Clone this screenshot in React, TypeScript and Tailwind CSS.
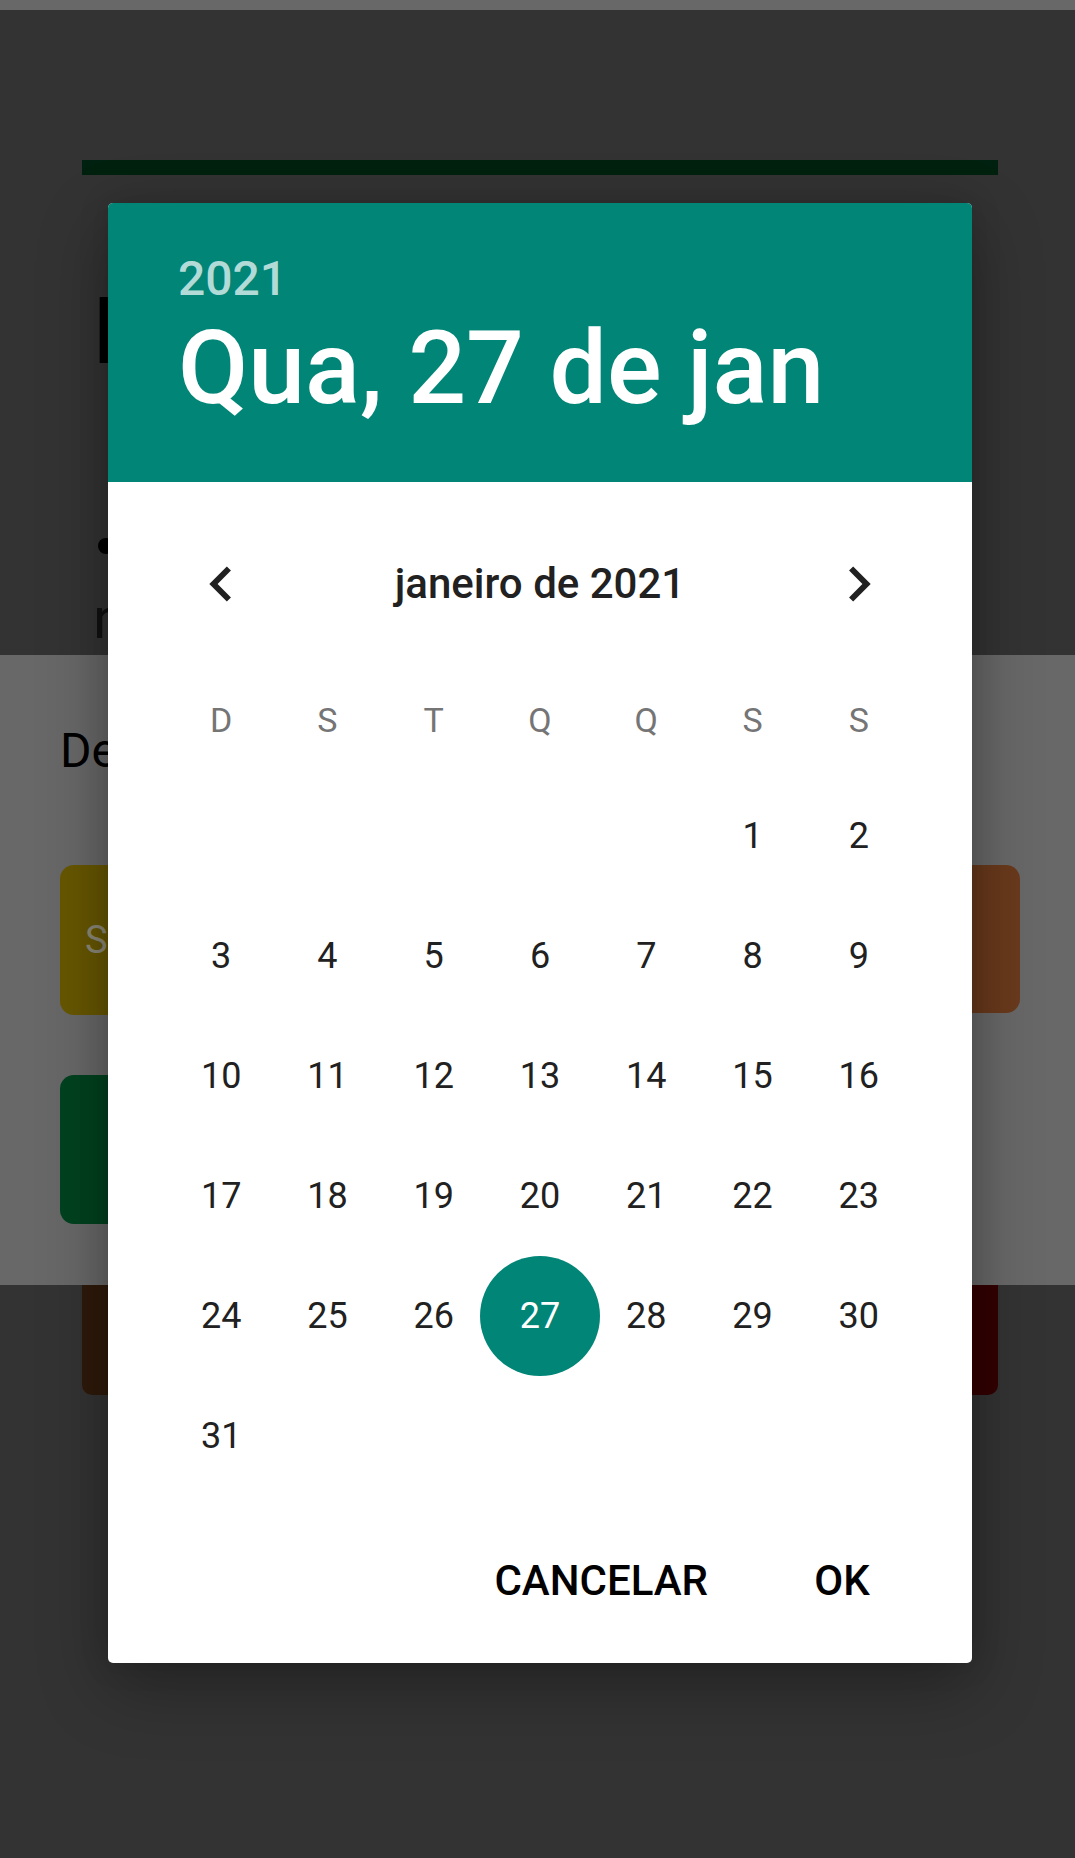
import React from "react";

const weekDays = ["D", "S", "T", "Q", "Q", "S", "S"];
// janeiro de 2021 começa numa sexta
const blanks = 5;
const days = Array.from({ length: 31 }, (_, i) => i + 1);
const selectedDay = 27;

const ChevronLeft = () => (
  <svg width="70" height="70" viewBox="0 0 24 24" fill="#212121">
    <path d="M15.41 7.41L14 6l-6 6 6 6 1.41-1.41L10.83 12z" />
  </svg>
);

const ChevronRight = () => (
  <svg width="70" height="70" viewBox="0 0 24 24" fill="#212121">
    <path d="M10 6L8.59 7.41 13.17 12l-4.58 4.59L10 18l6-6z" />
  </svg>
);

const BackgroundPage = () => (
  <div className="flex flex-col">
    <div className="h-[10px] bg-[#686868]" />
    <div className="ml-[82px] mr-[77px] mt-[150px] h-[15px] bg-[#00210f]" />
    <h1 className="mt-[110px] pl-[92px] text-[93px] leading-none text-black">Data</h1>
    <div className="mt-[138px] pl-[93px] text-[58px] leading-[68px] text-[#111]">
      <div className="flex items-center h-[68px]">
        <span className="ml-[5px] mt-[-8px] w-[16px] h-[16px] rounded-full bg-black inline-block" />
        <span className="ml-[20px]">Escolha</span>
      </div>
      <div>no dia</div>
    </div>
    <section className="mt-[3px] h-[630px] bg-[#686868] pl-[60px] pr-[55px] pt-[72px]">
      <p className="text-[48px] leading-none text-black">Defina</p>
      <div className="mt-[90px] grid grid-cols-2 gap-x-[20px] gap-y-[60px]">
        <div className="h-[150px] rounded-[14px] bg-[#675700] flex items-center pl-[25px]">
          <span className="text-[38px] text-[#8b8877]">Salvar</span>
        </div>
        <div className="h-[148px] rounded-[14px] bg-gradient-to-r from-[#5a3019] to-[#6a3a1c]" />
        <div className="h-[149px] rounded-[14px] bg-[#00421f]" />
      </div>
    </section>
    <div className="ml-[82px] mr-[77px] h-[110px] rounded-b-[10px] bg-gradient-to-r from-[#2e1a0b] to-[#330000]" />
  </div>
);

const DatePickerDialog = () => (
  <div className="absolute left-[108px] top-[203px] w-[864px] h-[1460px] rounded-[5px] bg-white overflow-hidden shadow-[0_24px_70px_rgba(0,0,0,0.3),0_0_30px_rgba(0,0,0,0.15)] flex flex-col">
    <div className="h-[279px] bg-[#008577] pl-[70px] pt-[52px] font-medium">
      <div className="text-[48px] leading-none text-[#b2dad6]">2021</div>
      <div className="mt-[14px] text-[102px] leading-none text-white">Qua, 27 de jan</div>
    </div>

    <div className="px-[60px] pt-[54px]">
      <div className="h-[96px] flex items-center">
        <button className="w-[106px] flex justify-center">
          <ChevronLeft />
        </button>
        <div className="flex-1 text-center text-[42px] font-medium leading-none text-[#212121]">
          janeiro de 2021
        </div>
        <button className="w-[106px] flex justify-center">
          <ChevronRight />
        </button>
      </div>

      <div className="mt-[32px] h-[112px] grid grid-cols-7 items-center">
        {weekDays.map((d, i) => (
          <span key={i} className="text-center text-[34px] leading-none text-[#757575]">
            {d}
          </span>
        ))}
      </div>

      <div className="grid grid-cols-7">
        {Array.from({ length: blanks }).map((_, i) => (
          <div key={"b" + i} className="h-[120px]" />
        ))}
        {days.map((d) => (
          <div key={d} className="h-[120px] flex items-center justify-center">
            {d === selectedDay ? (
              <span className="shrink-0 w-[120px] h-[120px] rounded-full bg-[#008577] flex items-center justify-center text-[36px] leading-none text-white">
                {d}
              </span>
            ) : (
              <span className="text-[36px] leading-none text-[#212121]">{d}</span>
            )}
          </div>
        ))}
      </div>
    </div>

    <div className="mt-[31px] h-[108px] flex justify-end items-center pr-[34px] gap-[14px]">
      <button className="h-[108px] min-w-[192px] px-[24px] text-[42px] font-medium leading-none text-black">
        CANCELAR
      </button>
      <button className="h-[108px] min-w-[192px] px-[24px] text-[42px] font-medium leading-none text-black">
        OK
      </button>
    </div>
  </div>
);

export default function App() {
  return (
    <div className="relative w-full h-[1858px] overflow-hidden bg-[#333333] font-['Roboto',sans-serif]">
      <BackgroundPage />
      <DatePickerDialog />
    </div>
  );
}
